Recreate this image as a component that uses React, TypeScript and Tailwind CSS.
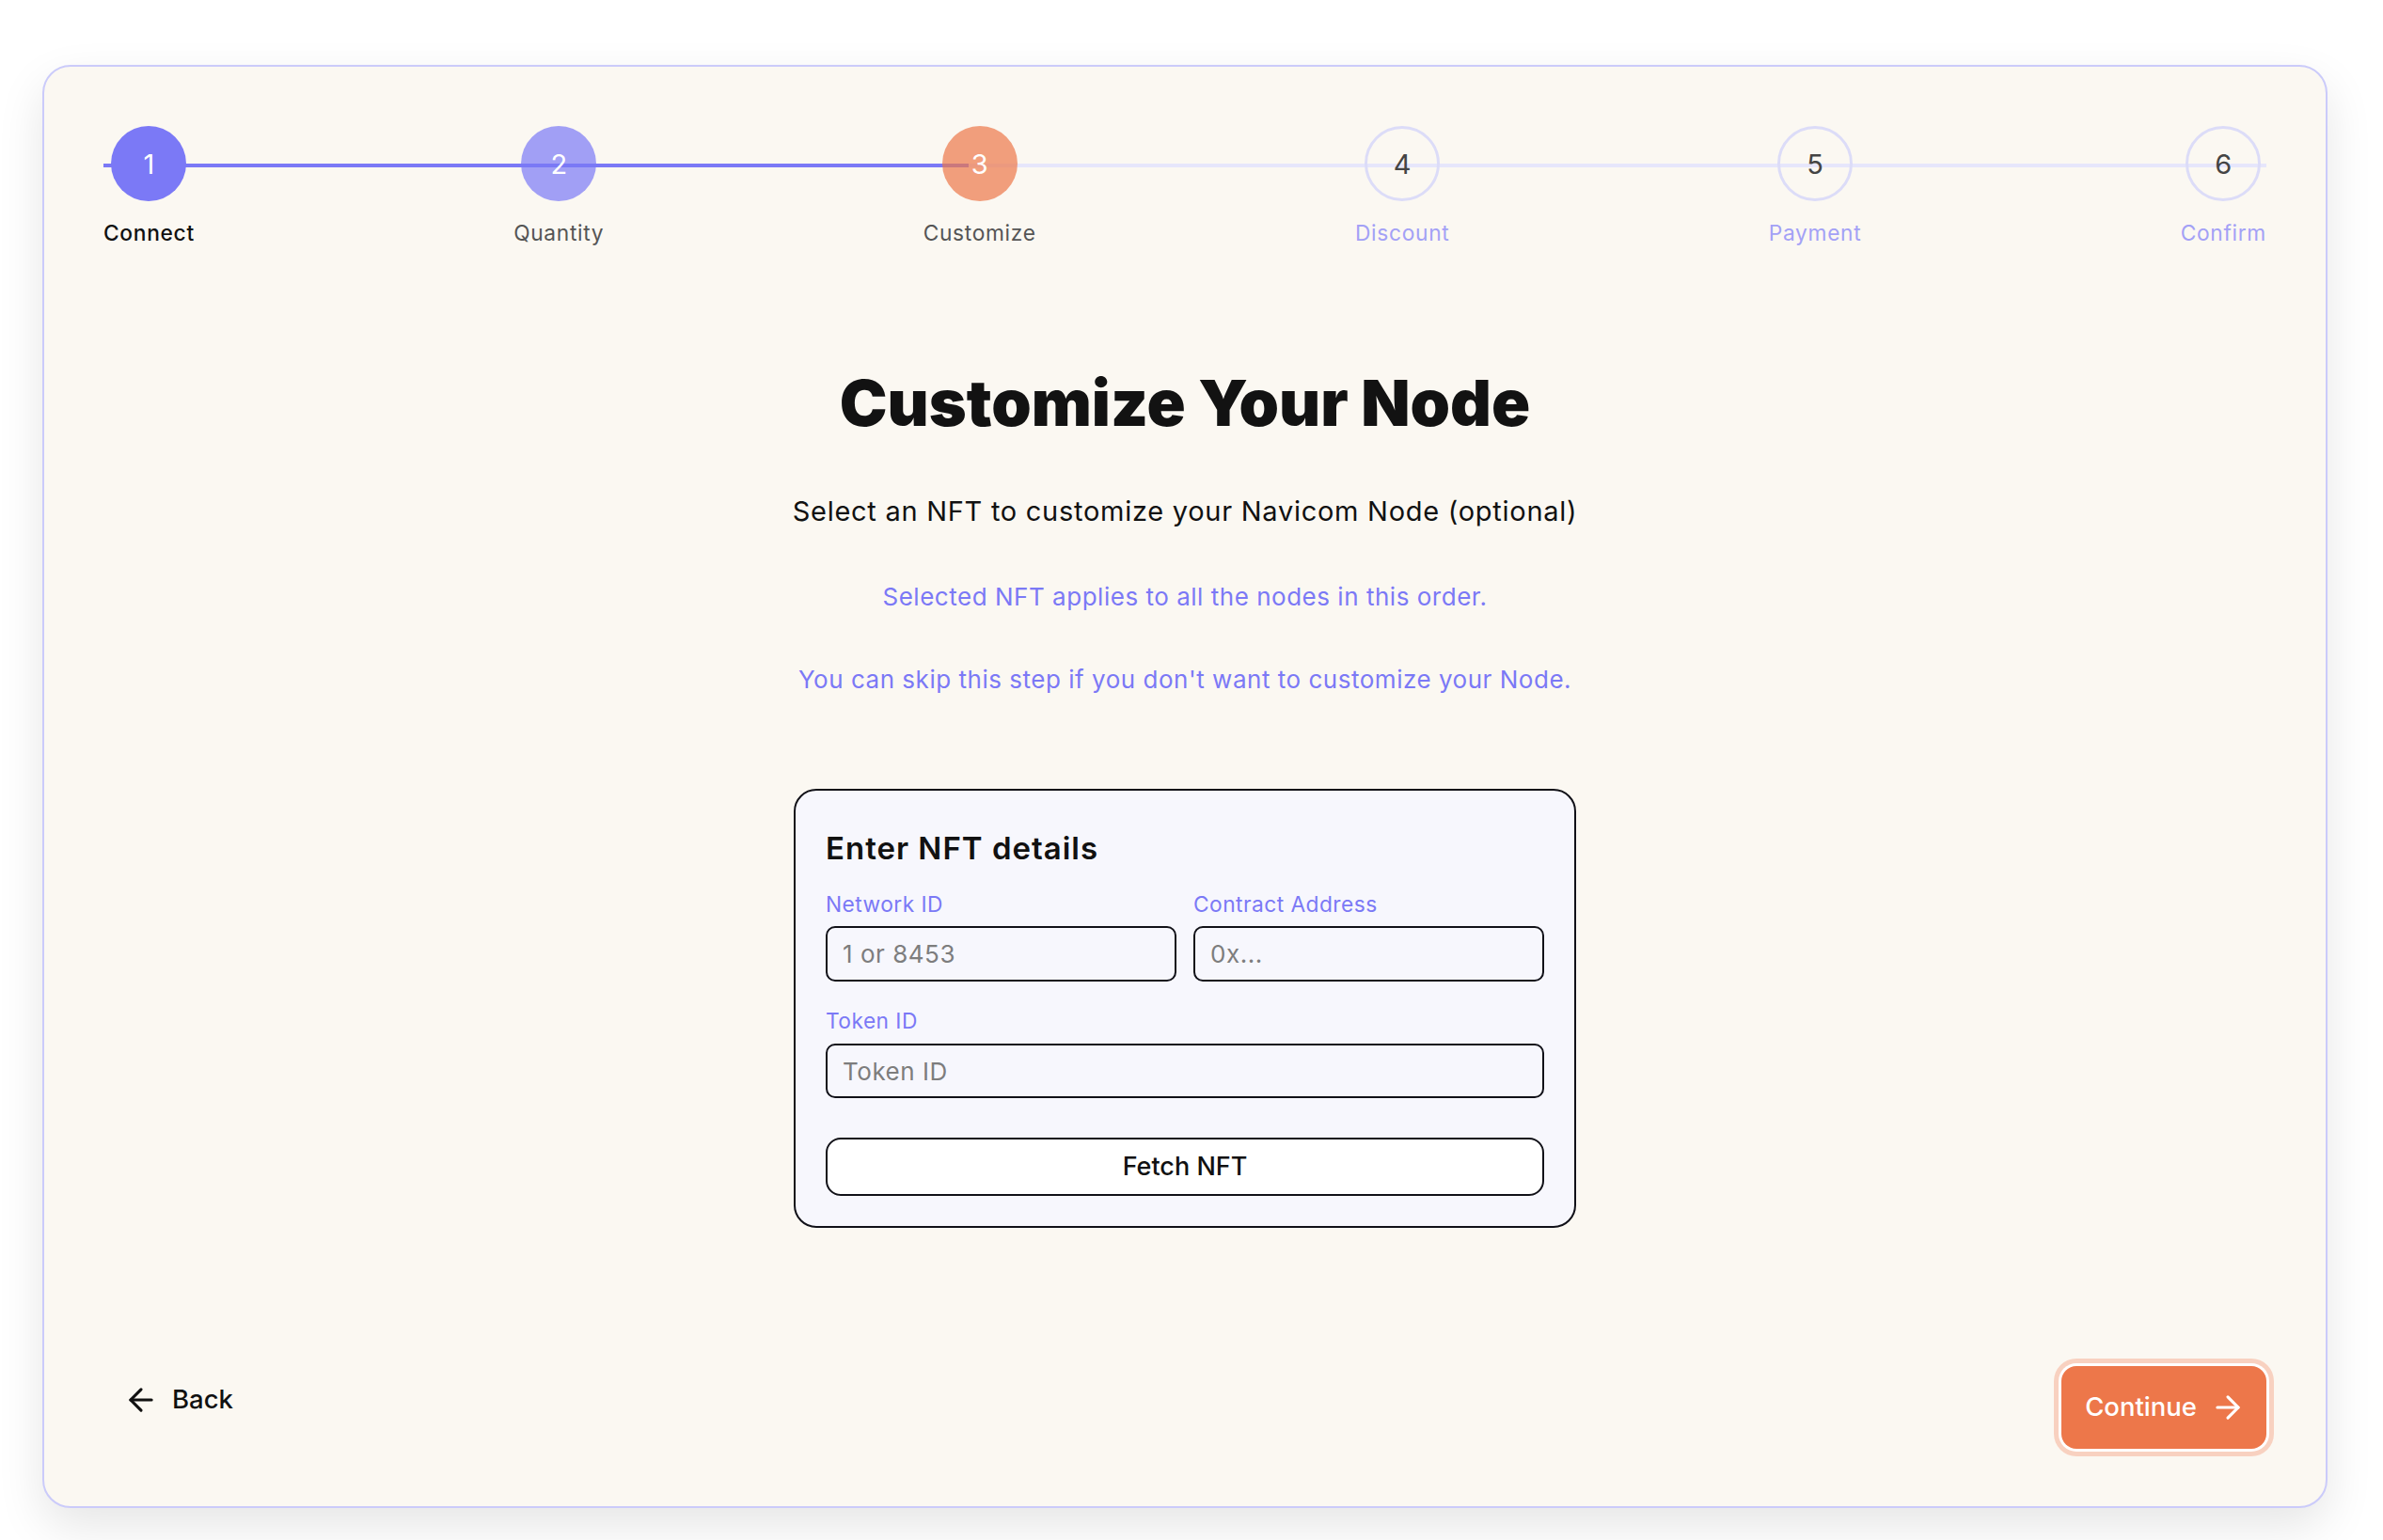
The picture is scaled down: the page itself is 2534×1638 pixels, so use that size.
import React from "react";
import { ArrowLeft, ArrowRight } from "lucide-react";

const steps = [
  { n: 1, label: "Connect", state: "done" },
  { n: 2, label: "Quantity", state: "done2" },
  { n: 3, label: "Customize", state: "current" },
  { n: 4, label: "Discount", state: "todo" },
  { n: 5, label: "Payment", state: "todo" },
  { n: 6, label: "Confirm", state: "todo" },
];

function Step({ n, label, state }: { n: number; label: string; state: string }) {
  let circle = "";
  let text = "";
  if (state === "done") {
    circle = "bg-[#7b79f6] text-white";
    text = "text-[#111111] font-medium";
  } else if (state === "done2") {
    circle = "bg-[#7b79f6]/70 text-white";
    text = "text-[#555555]";
  } else if (state === "current") {
    circle = "bg-[#ed774a]/70 text-white";
    text = "text-[#555555]";
  } else {
    circle = "border-[3px] border-[#dcdcf8] text-[#444444]";
    text = "text-[#a3a1f6]";
  }
  return (
    <div className="flex flex-col items-center">
      <div
        className={`relative flex h-[80px] w-[80px] items-center justify-center rounded-full text-[29px] leading-none ${circle}`}
      >
        {n}
      </div>
      <div className={`relative mt-[20px] text-[22.75px] leading-[28px] tracking-[0.03em] ${text}`}>{label}</div>
    </div>
  );
}

export default function App() {
  return (
    <div className="min-h-[1638px] w-full bg-white pl-[45px] pt-[69px] font-['Inter',sans-serif]">
      <div className="flex h-[1535px] w-[2430px] flex-col rounded-[30px] border-2 border-[#cbcbfa] bg-[#fbf8f2] px-[63px] pb-[61px] pt-[63px] shadow-[0_20px_50px_rgba(0,0,0,0.10)]">
        {/* Stepper */}
        <div className="relative flex justify-between">
          <div className="absolute left-0 right-0 top-[40px] h-[4px] bg-[#e6e6fb]" />
          <div className="absolute left-0 top-[40px] h-[4px] w-[40%] bg-[#7b79f6]" />
          {steps.map((s) => (
            <Step key={s.n} {...s} />
          ))}
        </div>

        {/* Main */}
        <div className="flex flex-col items-center">
          <h1 className="mt-[126px] text-[68px] font-black leading-[80px] tracking-normal text-[#121212]">
            Customize Your Node
          </h1>
          <p className="mt-[56px] text-[29px] leading-[40px] tracking-[0.025em] text-[#111111]">
            Select an NFT to customize your Navicom Node (optional)
          </p>
          <p className="mt-[53px] text-[26px] leading-[36px] tracking-[0.02em] text-[#7b79f6]">
            Selected NFT applies to all the nodes in this order.
          </p>
          <p className="mt-[52px] text-[26px] leading-[36px] tracking-[0.02em] text-[#7b79f6]">
            You can skip this step if you don't want to customize your Node.
          </p>

          <div className="mt-[98px] w-[832px] rounded-[24px] border-2 border-[#111118] bg-[#f7f7fd] px-[32px] pb-[32px] pt-[41px]">
            <h2 className="text-[33px] font-semibold leading-[40px] tracking-[0.03em] text-[#111111]">Enter NFT details</h2>
            <div className="mt-[26px] grid grid-cols-2 gap-x-[18px]">
              <div className="flex flex-col">
                <label className="text-[22.75px] leading-[28px] tracking-[0.02em] text-[#7b79f6]">Network ID</label>
                <input
                  placeholder="1 or 8453"
                  className="mt-[9px] h-[59px] w-full rounded-[10px] border-2 border-[#111118] bg-transparent px-[16px] text-[26px] tracking-[0.02em] text-[#111] outline-none placeholder:text-[#7d7d7d]"
                />
              </div>
              <div className="flex flex-col">
                <label className="text-[22.75px] leading-[28px] tracking-[0.02em] text-[#7b79f6]">Contract Address</label>
                <input
                  placeholder="0x..."
                  className="mt-[9px] h-[59px] w-full rounded-[10px] border-2 border-[#111118] bg-transparent px-[16px] text-[26px] tracking-[0.02em] text-[#111] outline-none placeholder:text-[#7d7d7d]"
                />
              </div>
            </div>
            <div className="mt-[28px] flex flex-col">
              <label className="text-[22.75px] leading-[28px] tracking-[0.02em] text-[#7b79f6]">Token ID</label>
              <input
                placeholder="Token ID"
                className="mt-[10px] h-[58px] w-full rounded-[10px] border-2 border-[#111118] bg-transparent px-[16px] text-[26px] tracking-[0.02em] text-[#111] outline-none placeholder:text-[#7d7d7d]"
              />
            </div>
            <button className="mt-[42px] flex h-[62px] w-full items-center justify-center rounded-[16px] border-2 border-[#111118] bg-white text-[27px] font-medium text-[#111111]">
              Fetch NFT
            </button>
          </div>
        </div>

        <div className="flex-1" />

        {/* Bottom row */}
        <div className="flex items-end justify-between">
          <button className="mb-[8px] flex h-[88px] items-center gap-[14px] pl-[21px] pr-[21px] text-[27.5px] font-medium text-[#111111]">
            <ArrowLeft size={38} strokeWidth={2} />
            <span>Back</span>
          </button>
          <button className="flex h-[88px] items-center gap-[14px] rounded-[16px] bg-[#ed774a] pl-[25px] pr-[22px] text-[27.5px] font-medium text-white shadow-[0_0_0_3px_#ffffff,0_0_0_8px_#f8d1c0]">
            <span>Continue</span>
            <ArrowRight size={38} strokeWidth={2} />
          </button>
        </div>
      </div>
    </div>
  );
}
